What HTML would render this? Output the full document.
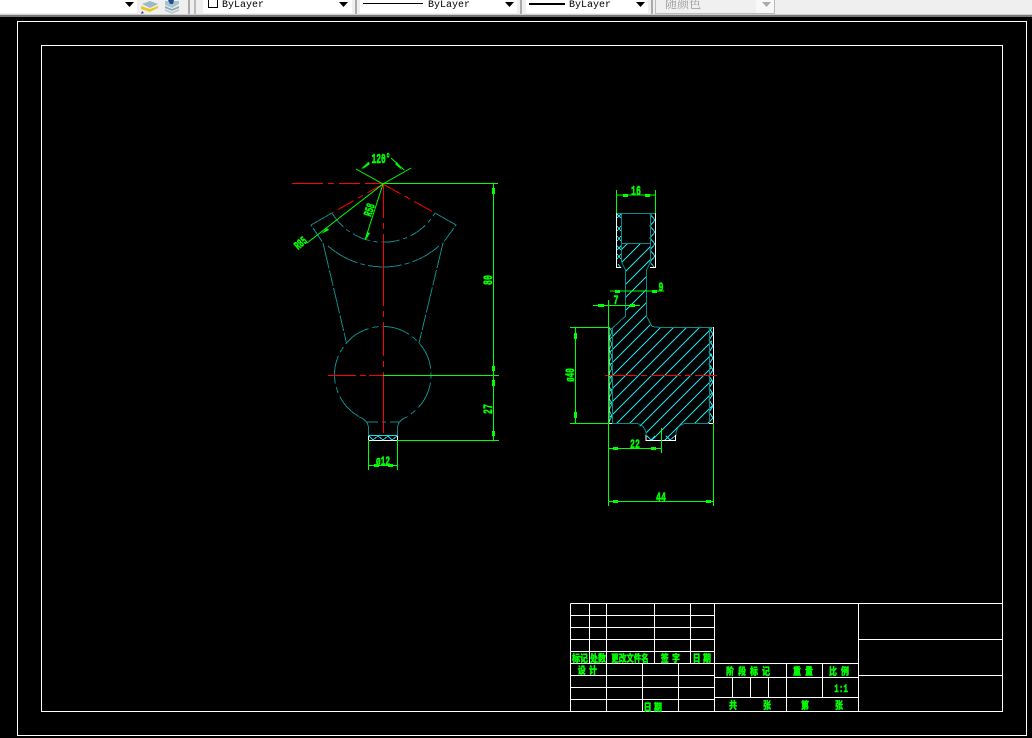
<!DOCTYPE html>
<html><head><meta charset="utf-8"><style>
html,body{margin:0;padding:0;background:#000;width:1032px;height:738px;overflow:hidden}
svg{display:block}
.g{fill:#0f0;stroke:#0f0;stroke-width:.45;font-family:"Liberation Mono",monospace;font-weight:bold;font-size:11px;text-anchor:middle}
.c{fill:#0f0;font-family:"Noto Sans CJK SC","WenQuanYi Zen Hei",sans-serif;font-weight:900;font-size:10px;text-anchor:middle;stroke:#0f0;stroke-width:.35}
.t{fill:#000;font-family:"Liberation Mono",monospace;font-size:10px}
</style></head><body>
<svg width="1032" height="738" viewBox="0 0 1032 738" xmlns="http://www.w3.org/2000/svg">
<defs>
<clipPath id="body2"><path d="M610 328L620 325L625.500 317V268L621 262V243H650V262L646.500 268V317L653 327H712V423H686L676 432V440H646V432L636 423H610Z"/></clipPath>
</defs>
<rect width="1032" height="738" fill="#000"/>
<!-- toolbar -->
<rect width="1032" height="16" fill="#efefef"/>
<rect y="14" width="1032" height="1" fill="#d0d0d0"/>
<rect y="15" width="1032" height="2" fill="#777"/>
<rect width="137" height="13" fill="#fff"/>
<path d="M125 2h9l-4.500 5z"/>
<g shape-rendering="crispEdges">
<rect x="188" y="0" width="2" height="14" fill="#aaa"/><rect x="194" y="0" width="2" height="14" fill="#bbb"/>
<rect x="203" width="149" height="13" fill="#fff"/>
<rect x="355" width="2" height="14" fill="#aaa"/>
<rect x="360" width="157" height="13" fill="#fff"/>
<rect x="520" width="2" height="14" fill="#aaa"/>
<rect x="526" width="122" height="13" fill="#fff"/>
<rect x="651" width="2" height="14" fill="#aaa"/>
<rect x="655.500" y="-1" width="119" height="14.500" fill="#f0f0f0" stroke="#bbb"/>
<rect x="756" width="18" height="13" fill="#f8f8f8"/>
<rect x="208.500" y="-1" width="9" height="8.500" fill="#fff" stroke="#000"/>
<rect x="363" y="3" width="60" height="1" fill="#000"/>
<rect x="529" y="3" width="36" height="2" fill="#000"/>
</g>
<!-- layer icons -->
<path d="M142 4l8-3 8 3-8 4z" fill="#9db9c8"/><path d="M141 6l9 3 8-3v2l-8 4-9-3z" fill="#e8c820"/><path d="M142 11l-1 3 3-1z" fill="#22458a"/>
<path d="M165 1h14v3l-7 4-7-3z" fill="#a9c2cf"/><path d="M165 6l7 3 7-3v2l-7 3-7-3z" fill="#8fa8b5"/><path d="M165 9l7 3 7-3v2l-7 3-7-3z" fill="#b9ccd6"/><path d="M168 0h6l-1 4h-3z" fill="#1f4f8f"/>
<path d="M339 2h9l-4.500 5zM505 2h9l-4.500 5zM636 2h9l-4.500 5z"/>
<path d="M762 2h9l-4.500 5z" fill="#aaa"/>
<text class="t" x="222" y="7">ByLayer</text>
<text class="t" x="428" y="7">ByLayer</text>
<text class="t" x="569" y="7">ByLayer</text>
<text x="665" y="8" font-family="'Noto Serif CJK SC','WenQuanYi Zen Hei',sans-serif" font-size="12" fill="#999">随颜色</text>
<!-- frames -->
<g fill="none" stroke="#fff" shape-rendering="crispEdges">
<rect x="17.500" y="21.500" width="1009" height="714"/>
<rect x="41.500" y="45.500" width="961" height="666"/>
<!-- title block -->
<path d="M570.500 603.500V711.500M589.500 603.500V663.500M606.500 603.500V711.500M654.500 603.500V663.500M690.500 603.500V663.500M714.500 603.500V711.500M642.500 663.500V711.500M678.500 663.500V711.500M858.500 603.500V711.500"/>
<path d="M570.500 603.500H1002.500M570.500 615.500H714.500M570.500 627.500H714.500M570.500 639.500H714.500M570.500 651.500H714.500M570.500 663.500H858.500M570.500 675.500H714.500M570.500 687.500H714.500M570.500 699.500H714.500"/>
<path d="M714.500 677.500H858.500M714.500 697.500H858.500M786.500 663.500V711.500M822.500 663.500V697.500M732.500 677.500V697.500M750.500 677.500V697.500M768.500 677.500V697.500"/>
<path d="M858.500 639.500H1002.500M858.500 675.500H1002.500"/>
</g>
<!-- title block text -->
<g>
<text class="c" transform="translate(580 662) scale(.8 1)">标记</text>
<text class="c" transform="translate(598 662) scale(.8 1)">处数</text>
<text class="c" transform="translate(630 662) scale(.75 1)">更改文件名</text>
<text class="c" transform="translate(672 662) scale(.8 1)" letter-spacing="4">签字</text>
<text class="c" transform="translate(703 662) scale(.8 1)" letter-spacing="3">日期</text>
<text class="c" transform="translate(589 674) scale(.8 1)" letter-spacing="4">设计</text>
<text class="c" transform="translate(654 711) scale(.8 1)" letter-spacing="3">日期</text>
<text class="c" transform="translate(750 675) scale(.8 1)" letter-spacing="5">阶段标记</text>
<text class="c" transform="translate(805 675) scale(.8 1)" letter-spacing="5">重量</text>
<text class="c" transform="translate(841 675) scale(.8 1)" letter-spacing="5">比例</text>
<text class="g" transform="translate(841 692) scale(.7 1)">1:1</text>
<text class="c" transform="translate(733 709) scale(.8 1)">共</text>
<text class="c" transform="translate(767 709) scale(.8 1)">张</text>
<text class="c" transform="translate(805 709) scale(.8 1)">第</text>
<text class="c" transform="translate(839 709) scale(.8 1)">张</text>
</g>
<!-- left view teal -->
<g fill="none" stroke="#0b8a8a" shape-rendering="crispEdges">
<path d="M332 213L311 225L323 243L346.500 343" stroke-dasharray="26 2 16 2"/>
<path d="M435 213L456 225L443 243L419 343" stroke-dasharray="26 2 16 2"/>
<path d="M332 213A60 60 0 0 0 435 213" stroke-dasharray="18 4 4 4"/>
<path d="M328 246A84 84 0 0 0 439 246" stroke-dasharray="34 3 5 3"/>
<path d="M359 416.500A48 48 0 0 1 346.500 343A48 48 0 0 1 419 343A48 48 0 0 1 407 416.500" stroke-dasharray="28 4 6 4"/>
<path d="M359 417Q368 420 368.500 428V435M407 417Q398 420 397.500 428V435"/>
<path d="M367 422H378M382 422H386M390 422H400" />
</g>
<path d="M368.500 440.500V435.500M397.500 440.500V435.500M368 440.500H398" fill="none" stroke="#fff" shape-rendering="crispEdges"/>
<path d="M369 435.500H397M369 436L373 440L378 436L383 440L388 436L392 440L397 436" fill="none" stroke="#19d8e0" shape-rendering="crispEdges"/>
<!-- red centre -->
<g fill="none" stroke="#f00" shape-rendering="crispEdges">
<path d="M292 183.500H383" stroke-dasharray="31 5 6 5 21 5"/>
<path d="M383.500 184V433" stroke-dasharray="34 5 6 5 72 5 6 5"/>
<path d="M328 375.500H383" stroke-dasharray="28 4 6 3 14"/>
<path d="M383 184L332 213" stroke-dasharray="18 5 6 5"/>
<path d="M383 184L435 213" stroke-dasharray="20 5 6 5"/>
</g>
<!-- right view -->
<g fill="none" stroke="#1fe0e8" shape-rendering="crispEdges">
<path clip-path="url(#body2)" d="M388 470L658 200M401 470L671 200M414 470L684 200M427 470L697 200M440 470L710 200M453 470L723 200M466 470L736 200M479 470L749 200M492 470L762 200M505 470L775 200M518 470L788 200M531 470L801 200M544 470L814 200M557 470L827 200M570 470L840 200M583 470L853 200M596 470L866 200M609 470L879 200M622 470L892 200M635 470L905 200M648 470L918 200M661 470L931 200"/>
<path d="M617 218L621 214M617 214L621 218M617 231L621 226M617 226L621 231M617 241L621 236M617 236L621 241M617 250L621 246M617 246L621 250M617 259L621 254M617 254L621 259M618 264L621 268"/>
<path d="M650 214L655 220L650 226L655 232L650 238L655 244L650 250L655 256L650 262L654 267"/>
<path d="M610 328L612 332L609 338L612 344L609 350L612 356L609 362L612 368L609 374L612 380L609 386L612 392L609 398L612 404L609 410L612 416L609 422"/>
<path d="M709 328L713 334L709 340L713 346L709 352L713 358L709 364L713 370L709 376L713 382L709 388L713 394L709 400L713 406L709 412L713 418L709 422"/>
<path d="M647 436L651 440L655 436M666 436L670 440L675 436"/>
</g>
<path d="M617 213.500H655M621.500 214V262M650.500 214V262M621.500 243.500H650.500M621.500 262L625.500 270V316L612 328.500H609M650.500 262L646.500 270V316L652 326.500L660 327.500H713M612.500 328V423M709.500 328V423M612 423.500H636Q644 424 646 433V436M676 436V433Q678 424 686 423.500H713" fill="none" stroke="#0b8a8a" shape-rendering="crispEdges"/>
<path d="M616.500 213V267.500H621M655.500 213V267.500H650M609 327V423.500H612M713.500 327V423.500H709M646 435V440.500H675.500V435M647 440.500H676" fill="none" stroke="#fff" shape-rendering="crispEdges"/>
<path d="M605 375.500H717" fill="none" stroke="#f00" stroke-dasharray="32 4 6 4 30 4 6 4" shape-rendering="crispEdges"/>
<!-- green dims -->
<g fill="none" stroke="#0f0" shape-rendering="crispEdges">
<path d="M383 183.500H498M493.500 184V440M383 375.500H499M397 440.500H499M368.500 440V470M397.500 440V470M368 465.500H398"/>
<path d="M616.500 190V213M655.500 190V213M617 195H655M610 291H664M593 305.500H640M608.500 300V506M570 327.500H609M570 423.500H609M575.500 328V423M609 448.500H661M661.500 428V453M609 501.500H713M713.500 423V506"/>
</g>
<g fill="none" stroke="#0f0">
<path d="M383 184L356 169M383 184L411 168M383 184L307 243M383 184L365 240M362 168.500L369 162M391 158L404 170"/>
</g>
<g fill="#0f0" shape-rendering="crispEdges">
<rect x="492" y="188" width="3" height="6"/><rect x="492" y="366" width="3" height="5"/><rect x="492" y="380" width="3" height="6"/><rect x="492" y="431" width="3" height="5"/>
<rect x="374" y="464" width="5" height="3"/><rect x="388" y="464" width="5" height="3"/>
<rect x="623" y="194" width="5" height="3"/><rect x="645" y="194" width="5" height="3"/>
<rect x="615" y="290" width="5" height="3"/><rect x="652" y="290" width="5" height="3"/>
<rect x="598" y="304" width="6" height="3"/><rect x="630" y="304" width="5" height="3"/>
<rect x="574" y="333" width="3" height="6"/><rect x="574" y="412" width="3" height="6"/>
<rect x="613" y="447" width="5" height="3"/><rect x="651" y="447" width="5" height="3"/>
<rect x="613" y="500" width="5" height="3"/><rect x="706" y="500" width="5" height="3"/>
</g>
<path d="M363 169l5-7 2 2zM402 170l-7-6 2-2z" fill="#0f0"/>
<path d="M321 234l6-6 2 2zM366 240l1-8 3 1z" fill="#0f0"/>
<!-- dim text -->
<g>
<text class="g" transform="translate(381 163) scale(.72 1.25)">120°</text>
<text class="g" transform="translate(492 280) rotate(-90) scale(.75 1.2)">80</text>
<text class="g" transform="translate(492 409) rotate(-90) scale(.75 1.2)">27</text>
<text class="g" transform="translate(383 465) scale(.72 1.2)">ø12</text>
<text class="g" transform="translate(373 211) rotate(-72) scale(.65 1.1)">R58</text>
<text class="g" transform="translate(303 246) rotate(-40) scale(.65 1.1)">R85</text>
<text class="g" transform="translate(636 195) scale(.75 1.25)">16</text>
<text class="g" transform="translate(661 291) scale(.75 1.2)">9</text>
<text class="g" transform="translate(616 304) scale(.75 1.2)">7</text>
<text class="g" transform="translate(574 375) rotate(-90) scale(.7 1.2)">ø40</text>
<text class="g" transform="translate(635 448) scale(.75 1.2)">22</text>
<text class="g" transform="translate(661 501) scale(.75 1.2)">44</text>
</g>
</svg>
</body></html>
